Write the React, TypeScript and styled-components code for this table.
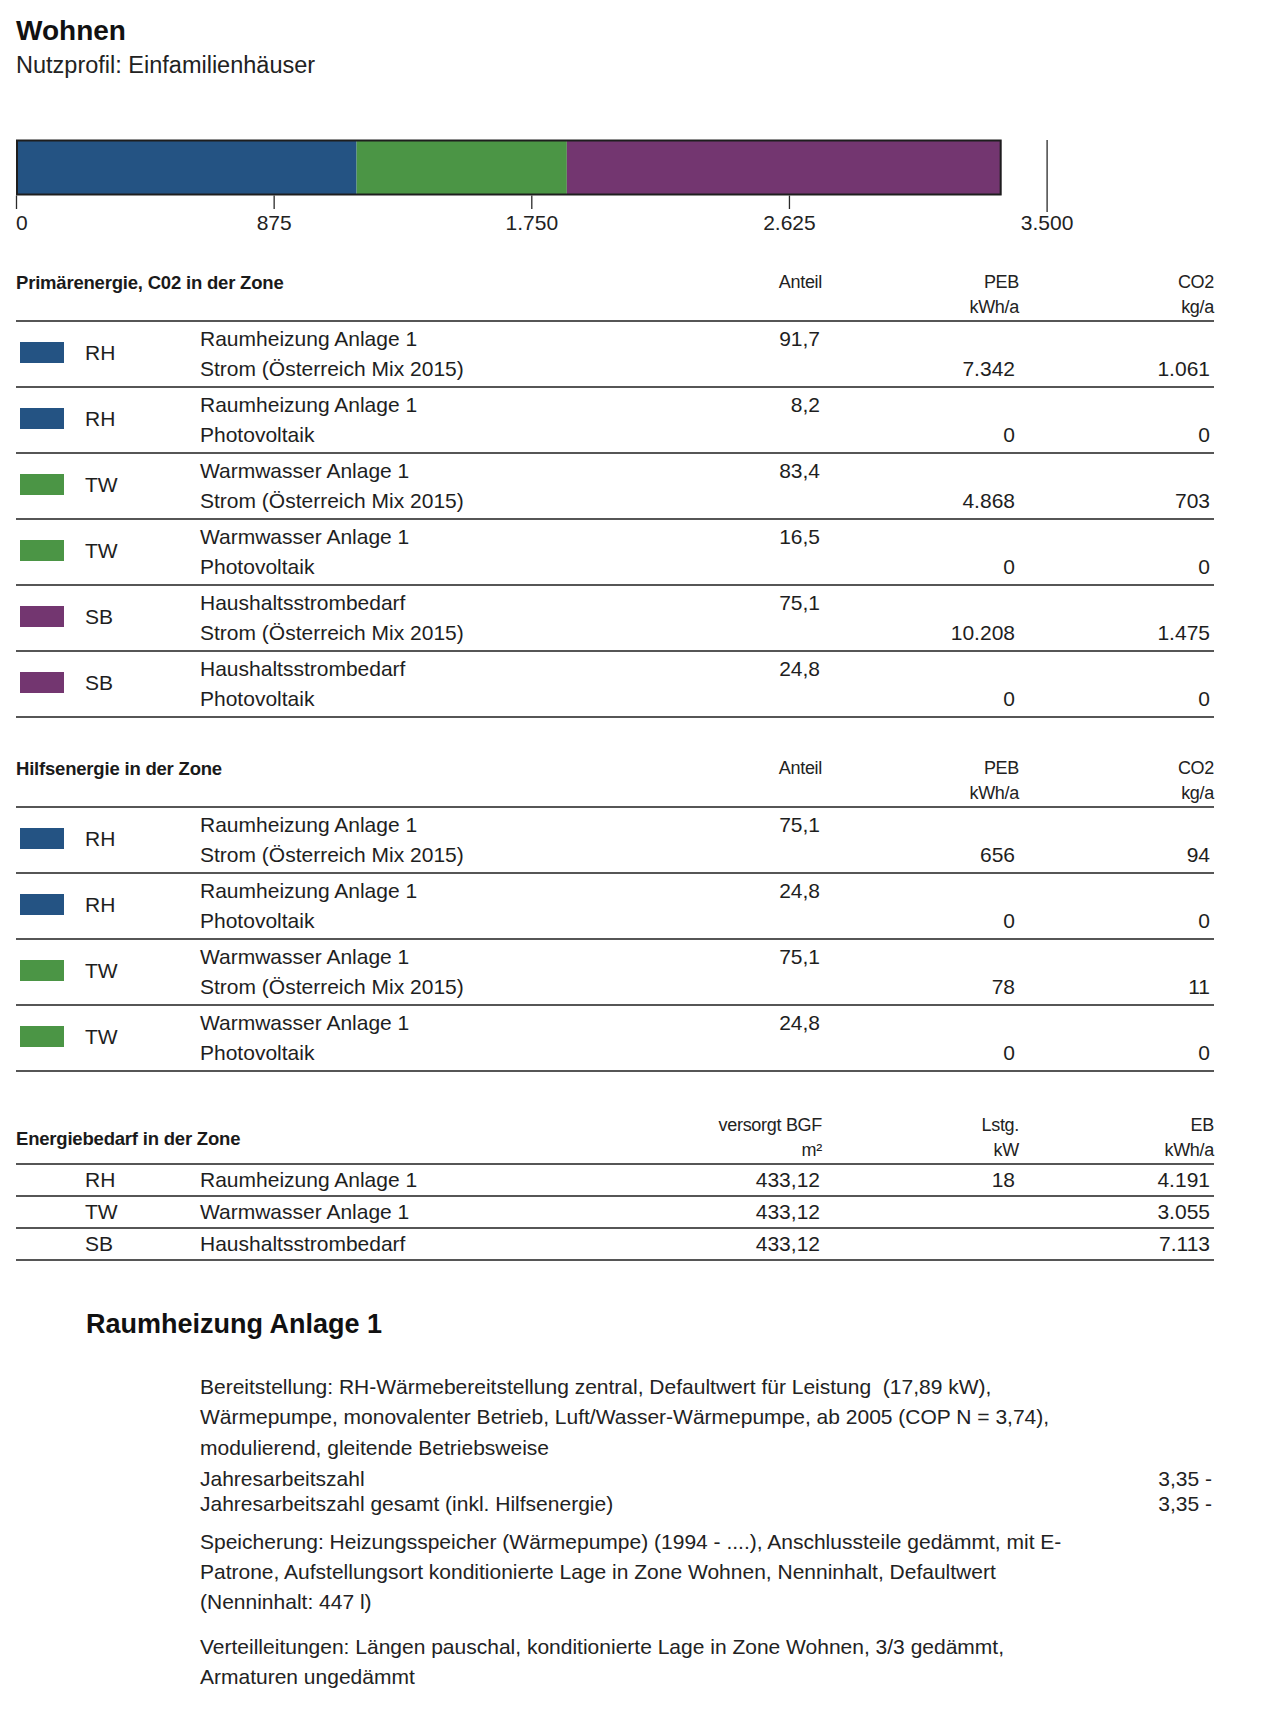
import React from "react";
import styled, { createGlobalStyle } from "styled-components";

const GlobalStyle = createGlobalStyle`
  html, body { margin: 0; padding: 0; background: #ffffff; }
  body {
    font-family: "Liberation Sans", Arial, Helvetica, sans-serif;
    color: #1e1e1e;
  }
`;

const COLORS: Record<string, string> = {
  RH: "#245383",
  TW: "#4b9545",
  SB: "#733670",
};

const LINE = "#565656";

const Page = styled.div`
  width: 1198px;
  padding: 15px 0 40px 16px;
`;

const Title = styled.h1`
  margin: 0;
  font-size: 28px;
  line-height: 32px;
  font-weight: 700;
  color: #111;
`;

const Subtitle = styled.div`
  margin-top: 4px;
  font-size: 23.5px;
  line-height: 28px;
  color: #222;
`;

const ChartSvg = styled.svg`
  display: block;
  margin-top: 51px;
  overflow: visible;
  font-family: "Liberation Sans", Arial, sans-serif;
`;

const Table = styled.section<{ $gap: number }>`
  margin-top: ${(p) => p.$gap}px;
  width: 1198px;
`;

const HeadRow = styled.div`
  display: grid;
  grid-template-columns: 706px 100px 197px 195px;
  border-bottom: 2px solid ${LINE};
`;

const SectionHeading = styled.div<{ $center?: boolean }>`
  font-size: 18.5px;
  font-weight: 700;
  line-height: 25px;
  letter-spacing: -0.2px;
  color: #1a1a1a;
  align-self: ${(p) => (p.$center ? "center" : "start")};
`;

const HeadCell = styled.div`
  display: flex;
  flex-direction: column;
  align-items: flex-end;
  white-space: nowrap;
  font-size: 18px;
  line-height: 25px;
  letter-spacing: -0.3px;
  color: #222;
  min-height: 50px;
`;

const Row = styled.div`
  display: grid;
  grid-template-columns: 69px 115px 522px 100px 197px 195px;
  padding: 2px 0;
  border-bottom: 2px solid ${LINE};
  font-size: 21px;
  line-height: 30px;
`;

const SwatchCell = styled.div`
  display: flex;
  align-items: center;
`;

const Swatch = styled.span<{ $color: string }>`
  display: block;
  width: 44px;
  height: 21px;
  margin-left: 4px;
  margin-top: -3px;
  background: ${(p) => p.$color};
`;

const Code = styled.div`
  display: flex;
  align-items: center;
  margin-top: -3px;
`;

const Desc = styled.div`
  display: flex;
  flex-direction: column;
`;

const Num = styled.div<{ $pos: "top" | "bottom"; $pad: number }>`
  text-align: right;
  padding-right: ${(p) => p.$pad}px;
  align-self: ${(p) => (p.$pos === "top" ? "start" : "end")};
`;

const EnergyRow = styled.div`
  display: grid;
  grid-template-columns: 69px 115px 522px 100px 197px 195px;
  border-bottom: 2px solid ${LINE};
  font-size: 21px;
  line-height: 30px;
`;

const EnergyNum = styled.div<{ $pad: number }>`
  text-align: right;
  padding-right: ${(p) => p.$pad}px;
`;

const SystemHeading = styled.h2`
  margin: 47px 0 0 70px;
  font-size: 27px;
  line-height: 32px;
  font-weight: 700;
  color: #111;
`;

const Details = styled.div`
  margin: 32px 0 0 184px;
  font-size: 21px;
  color: #222;
`;

const Para = styled.p<{ $gap?: number }>`
  margin: ${(p) => p.$gap ?? 0}px 0 0;
  width: 900px;
  line-height: 30.3px;
`;

const KeyRow = styled.div<{ $first?: boolean }>`
  display: flex;
  justify-content: space-between;
  margin-top: ${(p) => (p.$first ? 3 : 0)}px;
  line-height: 25px;
  padding-right: 2px;
`;

type PRow = { code: string; l1: string; l2: string; anteil: string; peb: string; co2: string };

const primaer: PRow[] = [
  { code: "RH", l1: "Raumheizung Anlage 1", l2: "Strom (Österreich Mix 2015)", anteil: "91,7", peb: "7.342", co2: "1.061" },
  { code: "RH", l1: "Raumheizung Anlage 1", l2: "Photovoltaik", anteil: "8,2", peb: "0", co2: "0" },
  { code: "TW", l1: "Warmwasser Anlage 1", l2: "Strom (Österreich Mix 2015)", anteil: "83,4", peb: "4.868", co2: "703" },
  { code: "TW", l1: "Warmwasser Anlage 1", l2: "Photovoltaik", anteil: "16,5", peb: "0", co2: "0" },
  { code: "SB", l1: "Haushaltsstrombedarf", l2: "Strom (Österreich Mix 2015)", anteil: "75,1", peb: "10.208", co2: "1.475" },
  { code: "SB", l1: "Haushaltsstrombedarf", l2: "Photovoltaik", anteil: "24,8", peb: "0", co2: "0" },
];

const hilfs: PRow[] = [
  { code: "RH", l1: "Raumheizung Anlage 1", l2: "Strom (Österreich Mix 2015)", anteil: "75,1", peb: "656", co2: "94" },
  { code: "RH", l1: "Raumheizung Anlage 1", l2: "Photovoltaik", anteil: "24,8", peb: "0", co2: "0" },
  { code: "TW", l1: "Warmwasser Anlage 1", l2: "Strom (Österreich Mix 2015)", anteil: "75,1", peb: "78", co2: "11" },
  { code: "TW", l1: "Warmwasser Anlage 1", l2: "Photovoltaik", anteil: "24,8", peb: "0", co2: "0" },
];

const energie = [
  { code: "RH", name: "Raumheizung Anlage 1", bgf: "433,12", lstg: "18", eb: "4.191" },
  { code: "TW", name: "Warmwasser Anlage 1", bgf: "433,12", lstg: "", eb: "3.055" },
  { code: "SB", name: "Haushaltsstrombedarf", bgf: "433,12", lstg: "", eb: "7.113" },
];

const barData = [
  { code: "RH", value: 1155 },
  { code: "TW", value: 714 },
  { code: "SB", value: 1475 },
];

const MAX = 3500;
const AXIS = 1030.6;

function Chart() {
  const k = AXIS / MAX;
  let x = 0.5;
  const segs = barData.map((d) => {
    const w = d.value * k;
    const s = { x, w, color: COLORS[d.code] };
    x += w;
    return s;
  });
  const total = x;
  const ticks = [0, 875, 1750, 2625, 3500];
  const fmt = (v: number) => (v >= 1000 ? `${Math.floor(v / 1000)}.${String(v % 1000).padStart(3, "0")}` : String(v));
  return (
    <ChartSvg width={1100} height={115} viewBox="0 0 1100 115">
      {segs.map((s, i) => (
        <rect key={i} x={s.x} y={10} width={s.w} height={55} fill={s.color} />
      ))}
      <rect x={1} y={10.5} width={total - 1.5} height={54} fill="none" stroke="#1e1e1e" strokeWidth={2} />
      {ticks.map((t, i) => {
        const tx = 0.5 + t * k;
        const last = i === ticks.length - 1;
        return (
          <g key={t}>
            <line x1={tx} x2={tx} y1={last ? 10 : 65.5} y2={last ? 82 : 79} stroke="#2a2a2a" strokeWidth={1.3} />
            <text
              x={i === 0 ? 0 : tx}
              y={100}
              fontSize={21}
              fill="#222"
              textAnchor={i === 0 ? "start" : "middle"}
            >
              {fmt(t)}
            </text>
          </g>
        );
      })}
    </ChartSvg>
  );
}

function EnergyTable({ title, rows, gap }: { title: string; rows: PRow[]; gap: number }) {
  return (
    <Table $gap={gap}>
      <HeadRow>
        <SectionHeading>{title}</SectionHeading>
        <HeadCell>
          <span>Anteil</span>
        </HeadCell>
        <HeadCell>
          <span>PEB</span>
          <span>kWh/a</span>
        </HeadCell>
        <HeadCell>
          <span>CO2</span>
          <span>kg/a</span>
        </HeadCell>
      </HeadRow>
      {rows.map((r, i) => (
        <Row key={i}>
          <SwatchCell>
            <Swatch $color={COLORS[r.code]} />
          </SwatchCell>
          <Code>{r.code}</Code>
          <Desc>
            <span>{r.l1}</span>
            <span>{r.l2}</span>
          </Desc>
          <Num $pos="top" $pad={2}>
            {r.anteil}
          </Num>
          <Num $pos="bottom" $pad={4}>
            {r.peb}
          </Num>
          <Num $pos="bottom" $pad={4}>
            {r.co2}
          </Num>
        </Row>
      ))}
    </Table>
  );
}

export default function App() {
  return (
    <>
      <GlobalStyle />
      <Page>
        <Title>Wohnen</Title>
        <Subtitle>Nutzprofil: Einfamilienhäuser</Subtitle>
        <Chart />

        <EnergyTable title="Primärenergie, C02 in der Zone" rows={primaer} gap={25} />
        <EnergyTable title="Hilfsenergie in der Zone" rows={hilfs} gap={38} />

        <Table $gap={41}>
          <HeadRow>
            <SectionHeading $center>Energiebedarf in der Zone</SectionHeading>
            <HeadCell>
              <span>versorgt BGF</span>
              <span>m²</span>
            </HeadCell>
            <HeadCell>
              <span>Lstg.</span>
              <span>kW</span>
            </HeadCell>
            <HeadCell>
              <span>EB</span>
              <span>kWh/a</span>
            </HeadCell>
          </HeadRow>
          {energie.map((r) => (
            <EnergyRow key={r.code}>
              <span />
              <span>{r.code}</span>
              <span>{r.name}</span>
              <EnergyNum $pad={2}>{r.bgf}</EnergyNum>
              <EnergyNum $pad={4}>{r.lstg}</EnergyNum>
              <EnergyNum $pad={4}>{r.eb}</EnergyNum>
            </EnergyRow>
          ))}
        </Table>

        <SystemHeading>Raumheizung Anlage 1</SystemHeading>
        <Details>
          <Para>
            Bereitstellung: RH-Wärmebereitstellung zentral, Defaultwert für Leistung&nbsp; (17,89 kW),
            Wärmepumpe, monovalenter Betrieb, Luft/Wasser-Wärmepumpe, ab 2005 (COP N = 3,74),
            modulierend, gleitende Betriebsweise
          </Para>
          <KeyRow $first>
            <span>Jahresarbeitszahl</span>
            <span>3,35 -</span>
          </KeyRow>
          <KeyRow>
            <span>Jahresarbeitszahl gesamt (inkl. Hilfsenergie)</span>
            <span>3,35 -</span>
          </KeyRow>
          <Para $gap={11}>
            Speicherung: Heizungsspeicher (Wärmepumpe) (1994 - ....), Anschlussteile gedämmt, mit E-Patrone,
            Aufstellungsort konditionierte Lage in Zone Wohnen, Nenninhalt, Defaultwert (Nenninhalt: 447 l)
          </Para>
          <Para $gap={14}>
            Verteilleitungen: Längen pauschal, konditionierte Lage in Zone Wohnen, 3/3 gedämmt, Armaturen
            ungedämmt
          </Para>
        </Details>
      </Page>
    </>
  );
}
